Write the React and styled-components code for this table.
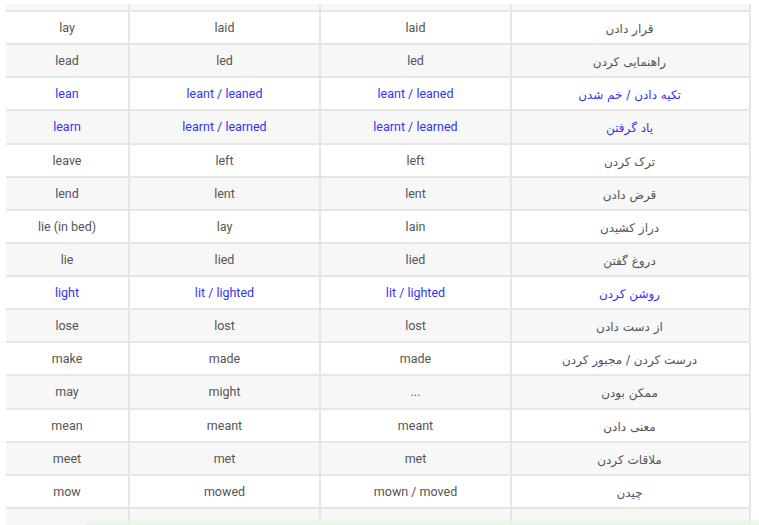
import styled, { createGlobalStyle } from "styled-components";

const GlobalStyle = createGlobalStyle`
  html, body {
    margin: 0;
    padding: 0;
    background: #fff;
  }
  body {
    font-family: Roboto, "DejaVu Sans", sans-serif;
    overflow: hidden;
  }
`;

const verbs = [
  ["lay", "laid", "laid", "قرار دادن"],
  ["lead", "led", "led", "راهنمایی کردن"],
  ["lean", "leant / leaned", "leant / leaned", "تکیه دادن / خم شدن", true],
  ["learn", "learnt / learned", "learnt / learned", "یاد گرفتن", true],
  ["leave", "left", "left", "ترک کردن"],
  ["lend", "lent", "lent", "قرض دادن"],
  ["lie (in bed)", "lay", "lain", "دراز کشیدن"],
  ["lie", "lied", "lied", "دروغ گفتن"],
  ["light", "lit / lighted", "lit / lighted", "روشن کردن", true],
  ["lose", "lost", "lost", "از دست دادن"],
  ["make", "made", "made", "درست کردن / مجبور کردن"],
  ["may", "might", "...", "ممکن بودن"],
  ["mean", "meant", "meant", "معنی دادن"],
  ["meet", "met", "met", "ملاقات کردن"],
  ["mow", "mowed", "mown / moved", "چیدن"],
];

const Page = styled.div`
  position: relative;
  height: 525px;
  overflow: hidden;
  padding: 4px 10px 0 6px;
`;

const Table = styled.div`
  width: 743px;
  border-right: 2px solid #e6e6e6;
`;

const Row = styled.div`
  display: grid;
  grid-template-columns: 122px 191px 191px 237px;
  height: ${(p) => p.$h || "31.14px"};
  border-bottom: ${(p) => (p.$noLine ? "none" : "2px solid #e6e6e6")};
  background: ${(p) => (p.$shaded ? "#f7f7f7" : "#fff")};
`;

const Cell = styled.div`
  display: flex;
  align-items: center;
  justify-content: center;
  font-size: 12.5px;
  color: ${(p) => (p.$blue ? "#3434f0" : "#555")};
  border-left: ${(p) => (p.$first ? "none" : "2px solid #e6e6e6")};
  white-space: nowrap;
`;

const FaCell = styled(Cell)`
  direction: rtl;
  font-family: "DejaVu Sans", sans-serif;
  font-size: 12px;
  padding-top: 3px;
`;

const BottomGlow = styled.div`
  position: absolute;
  left: 85px;
  right: 0;
  bottom: 0;
  height: 9px;
  border-top-left-radius: 6px;
  background: linear-gradient(to bottom, rgba(232, 246, 232, 0.6), rgba(225, 243, 225, 0.9));
`;

const App = () => (
  <Page>
    <GlobalStyle />
    <Table>
      <Row $shaded $h="6px">
        <Cell $first />
        <Cell />
        <Cell />
        <Cell />
      </Row>
      {verbs.map(([base, past, participle, meaning, blue], i) => (
        <Row key={base + i} $shaded={i % 2 === 1}>
          <Cell $first $blue={blue}>{base}</Cell>
          <Cell $blue={blue}>{past}</Cell>
          <Cell $blue={blue}>{participle}</Cell>
          <FaCell $blue={blue}>{meaning}</FaCell>
        </Row>
      ))}
      <Row $shaded $noLine $h="40px">
        <Cell $first />
        <Cell />
        <Cell />
        <Cell />
      </Row>
    </Table>
    <BottomGlow />
  </Page>
);

export default App;
